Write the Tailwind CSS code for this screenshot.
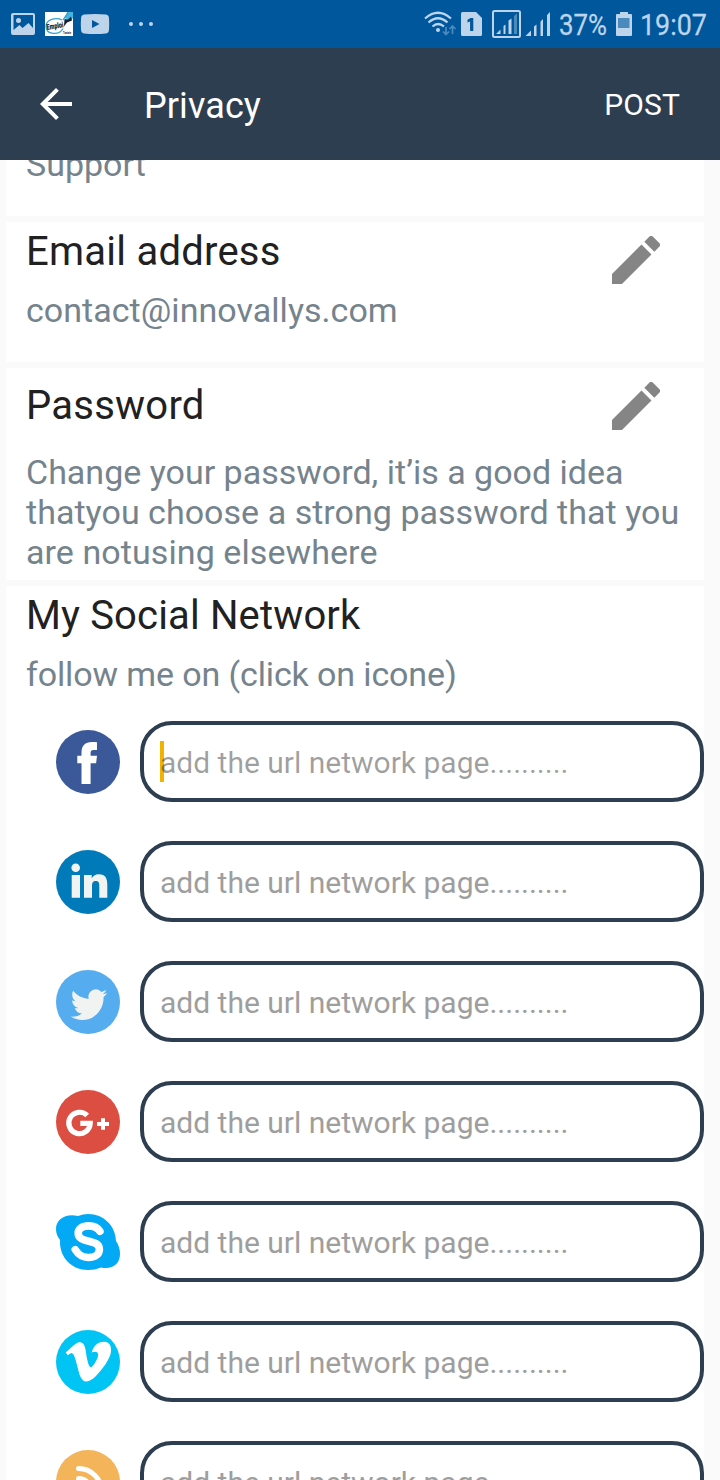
<!DOCTYPE html>
<html lang="en">
<head>
<meta charset="utf-8">
<title>Privacy</title>
<script src="https://cdn.jsdelivr.net/npm/@tailwindcss/browser@4"></script>
</head>
<body class="bg-[#fafafa]">
<div class="w-[720px] h-[1480px] overflow-hidden flex flex-col font-['Roboto',sans-serif]">
  <!-- Status bar -->
  <div class="h-12 shrink-0 bg-[#00579c] text-[#bdd4ea] flex items-center justify-between">
    <svg class="block" width="240" height="48" viewBox="0 0 240 48">
      <path fill="currentColor" fill-rule="evenodd" d="M13 13h20a2 2 0 0 1 2 2v18a2 2 0 0 1-2 2H13a2 2 0 0 1-2-2V15a2 2 0 0 1 2-2zM13.500 15v15l6-5 3 3 6-5 4.500 5V15z"/>
      <circle cx="18.500" cy="20.500" r="2.500" fill="currentColor"/>
      <rect x="45" y="12" width="28" height="24" fill="#fff"/>
      <path d="M67 12h6v6l-3 3-5-3z" fill="#43b5e3"/>
      <path d="M64.500 19l3.500.500 3-3 1 4-5 2-3 4z" fill="#142230"/>
      <path d="M62 20c-6-3-16-1-16 6.500 0 8 13 9.500 17 2M63 20l5-7" fill="none" stroke="#35a2cf" stroke-width="1.300"/>
      <text x="47" y="30" transform="rotate(-9 47 30)" font-size="8" font-weight="900" textLength="17" lengthAdjust="spacingAndGlyphs" fill="#111">Emploi</text>
      <text x="63" y="34" font-size="3.500" font-weight="700" textLength="8" lengthAdjust="spacingAndGlyphs" fill="#111">Tunisie</text>
      <path fill="currentColor" fill-rule="evenodd" d="M84 14.500q11-1 22 0 3 .5 3 4 .4 5.500 0 11 0 3.500-3 4-11 1-22 0-3-.5-3-4-.4-5.500 0-11 0-3.500 3-4zM92 20v8l7.500-4z"/>
      <g fill="currentColor"><circle cx="131" cy="24" r="2"/><circle cx="141" cy="24" r="2"/><circle cx="151" cy="24" r="2"/></g>
    </svg>
    <svg class="block" width="310" height="48" viewBox="410 0 310 48">
      <g fill="none" stroke="currentColor" stroke-width="2.200">
        <path d="M425 18.500q13-11.500 26 0M428.500 22.500q9.500-8.500 19 0M432.500 26.500q5.500-5 11.500 0"/>
      </g>
      <circle cx="438" cy="30" r="2" fill="currentColor"/>
      <g stroke="#4b8abd" stroke-width="1.700" fill="none"><path d="M446 27v8M443 31.500l3 3 3-3M452.500 34v-8M449.500 29l3-3 3 3"/></g>
      <path fill="currentColor" d="M462.500 12h13.500l6 6v16.500a1.500 1.500 0 0 1-1.500 1.500h-18a1.500 1.500 0 0 1-1.500-1.500v-21a1.500 1.500 0 0 1 1.500-1.500z"/>
      <path fill="#00579c" d="M470.500 18h2.800v13h-3.200v-9.500l-2.600 1v-2.700z"/>
      <rect x="493" y="11" width="27" height="26" rx="1.500" fill="none" stroke="currentColor" stroke-width="2"/>
      <g fill="currentColor"><path d="M496 34l4.500-4.500V34zM503.500 26l2-1.500V34h-2zM508.500 20.500l3-2v15.500h-3z"/><path d="M525.500 36l5.500-5.500V36zM534 26.500l2.500-2V36h-2.500zM540.500 21.500l2.500-2.500v17h-2.500zM547 15l3-3v24h-3z"/><path fill="#4b8abd" d="M514 16l3-2.500V34h-3z"/></g>
      <text x="559" y="35" font-size="30" fill="currentColor" stroke="currentColor" stroke-width=".3" textLength="48" lengthAdjust="spacingAndGlyphs">37%</text>
      <path fill="currentColor" d="M620 12h8v2h3q1 0 1 1v20q0 1-1 1h-14q-1 0-1-1V15q0-1 1-1h3z"/>
      <rect x="618" y="18" width="11.500" height="10" fill="#4b8abd"/>
      <text x="640" y="35" font-size="30" fill="currentColor" stroke="currentColor" stroke-width=".3" textLength="67" lengthAdjust="spacingAndGlyphs">19:07</text>
    </svg>
  </div>
  <!-- App bar -->
  <div class="h-28 shrink-0 bg-[#2d3e50] text-white flex items-center pl-10 pr-10">
    <svg class="block" width="32" height="32" viewBox="4 4 16 16" fill="currentColor"><path d="M20 11H7.830l5.590-5.590L12 4l-8 8 8 8 1.410-1.410L7.830 13H20v-2z"/></svg>
    <h1 class="ml-[72px] mt-1 text-[36px] leading-[42px] tracking-[0.1px]">Privacy</h1>
    <div class="ml-auto mt-0.5 text-[30px] leading-9 tracking-[0.1px]">POST</div>
  </div>
  <!-- Settings cards -->
  <main class="ml-1.5 w-[698px] flex flex-col gap-1.5 text-[34px] leading-10 text-[#75838d]">
    <section class="h-14 bg-white pl-5 overflow-hidden"><div class="-mt-4">Support</div></section>
    <section class="h-[140px] bg-white pl-5 pr-11 flex justify-between">
      <div>
        <h2 class="mt-[6px] text-[40px] leading-[47px] tracking-[0.24px] text-[#212121]">Email address</h2>
        <div class="mt-[15px] tracking-[0.04px]">contact@innovallys.com</div>
      </div>
      <svg class="mt-[14px]" width="48" height="48" viewBox="3 3 18 18" fill="#858585"><path d="M3 17.250V21h3.750L17.810 9.940l-3.750-3.750L3 17.250zM20.710 7.040a1 1 0 0 0 0-1.410l-2.340-2.340a1 1 0 0 0-1.410 0l-1.830 1.830 3.750 3.750 1.830-1.830z"/></svg>
    </section>
    <section class="h-[212px] bg-white pl-5">
      <div class="flex justify-between pr-11">
        <h2 class="mt-[14px] text-[40px] leading-[47px] tracking-[0.24px] text-[#212121]">Password</h2>
        <svg class="mt-[14px]" width="48" height="48" viewBox="3 3 18 18" fill="#858585"><path d="M3 17.250V21h3.750L17.810 9.940l-3.750-3.750L3 17.250zM20.710 7.040a1 1 0 0 0 0-1.410l-2.340-2.340a1 1 0 0 0-1.410 0l-1.830 1.830 3.750 3.750 1.830-1.830z"/></svg>
      </div>
      <p class="mt-[22px] whitespace-nowrap">Change your password, it’is a good idea<br><span class="tracking-[0.03px]">thatyou choose a strong password that you</span><br><span class="tracking-[0.08px]">are notusing elsewhere</span></p>
    </section>
    <section class="h-[894px] bg-white overflow-hidden">
      <div class="pl-5">
        <h2 class="pt-[6px] text-[40px] leading-[47px] tracking-[0.15px] text-[#212121]">My Social Network</h2>
        <div class="mt-[15px] tracking-[-0.12px]">follow me on (click on icone)</div>
      </div>
      <div class="mt-[27px] pl-[50px] flex flex-col gap-[39px] text-[30px] leading-9 text-[#9e9e9e]">
        <div class="flex items-center gap-5">
          <svg width="64" height="64" viewBox="0 0 64 64"><circle cx="32" cy="32" r="32" fill="#3b5998"/><path fill="#fff" d="M25.500 54V33.300H21.300V25.700h4.200V23c0-7.500 3.500-11 10.500-11 2 0 3.500.1 5 .3V20h-3.200c-2.500 0-3.200 1-3.200 3v2.700H41l-.9 7.600h-5.500V54z"/></svg>
          <div class="relative w-[564px] h-[81px] border-4 border-[#2d3e50] rounded-[32px] pl-4 flex items-center"><span class="absolute left-4 top-4 w-1 h-[41px] bg-[#f0b400]"></span><span class="relative mt-[3px] text-black/38">add the url network page..........</span></div>
        </div>
        <div class="flex items-center gap-5">
          <svg width="64" height="64" viewBox="0 0 64 64"><circle cx="32" cy="32" r="32" fill="#007ab9"/><g fill="#f1f2f2"><circle cx="19.700" cy="17.700" r="4.300"/><path d="M15.700 25H24v22.800H15.700zM28 25h7.700v3.200c1.200-2.200 3.500-4 7-4 7.200 0 8.600 4.500 8.600 11v12.600h-8V36.500c0-3 0-5.500-3.500-5.500s-3.800 2.500-3.800 5.500v11.300H28z"/></g></svg>
          <div class="w-[564px] h-[81px] border-4 border-[#2d3e50] rounded-[32px] pl-4 flex items-center"><span class="mt-[3px]">add the url network page..........</span></div>
        </div>
        <div class="flex items-center gap-5">
          <svg width="64" height="64" viewBox="0 0 64 64"><circle cx="32" cy="32" r="32" fill="#55acee"/><path transform="translate(14.700 15.900) scale(1.525 1.570)" fill="#f1f2f2" d="M23.953 4.570a10 10 0 0 1-2.825.775 4.958 4.958 0 0 0 2.163-2.723c-.951.555-2.005.959-3.127 1.184a4.920 4.920 0 0 0-8.384 4.482C7.690 8.095 4.067 6.130 1.640 3.162a4.822 4.822 0 0 0-.666 2.475c0 1.710.870 3.213 2.188 4.096a4.904 4.904 0 0 1-2.228-.616v.06a4.923 4.923 0 0 0 3.946 4.827 4.996 4.996 0 0 1-2.212.085 4.936 4.936 0 0 0 4.604 3.417 9.867 9.867 0 0 1-6.102 2.105c-.390 0-.779-.023-1.170-.067a13.995 13.995 0 0 0 7.557 2.209c9.053 0 13.998-7.496 13.998-13.985 0-.210 0-.420-.015-.630a9.935 9.935 0 0 0 2.460-2.548z"/></svg>
          <div class="w-[564px] h-[81px] border-4 border-[#2d3e50] rounded-[32px] pl-4 flex items-center"><span class="mt-[3px]">add the url network page..........</span></div>
        </div>
        <div class="flex items-center gap-5">
          <svg width="64" height="64" viewBox="0 0 64 64"><circle cx="32" cy="32" r="32" fill="#dc4e41"/><g fill="none" stroke="#fff" stroke-width="5.200"><path d="M31.200 25.500A10.700 10.700 0 1 0 34.200 33.400H24.300"/><path stroke-width="4" d="M47 28.300v11.500M41 34h12"/></g></svg>
          <div class="w-[564px] h-[81px] border-4 border-[#2d3e50] rounded-[32px] pl-4 flex items-center"><span class="mt-[3px]">add the url network page..........</span></div>
        </div>
        <div class="flex items-center gap-5">
          <svg width="64" height="64" viewBox="0 0 64 64"><path fill="#03a9f4" d="M22 6Q27 4 32 4C48 4 59.500 16 60 31Q64 37 64 44C64 54 56 60 45 57.500Q39 60 32 60C16 60 4 48 4 32V30Q0 25 0 19C0 9 10 3 22 6Z"/><path d="M44.200 21.300c-2.500-4-6.500-5.400-11.200-5.400-6.500 0-10.500 3-10.500 7.300 0 11 21.200 5 21.200 16 0 5.500-5 8.300-11.200 8.300-7.500 0-10.500-4-12.900-7.700" fill="none" stroke="#fff" stroke-width="7.600" stroke-linecap="round" transform="translate(-.3 0)"/></svg>
          <div class="w-[564px] h-[81px] border-4 border-[#2d3e50] rounded-[32px] pl-4 flex items-center"><span class="mt-[3px]">add the url network page..........</span></div>
        </div>
        <div class="flex items-center gap-5">
          <svg width="64" height="64" viewBox="0 0 64 64"><circle cx="32" cy="32" r="32" fill="#00c4f3"/><path transform="translate(9.700 8.600) scale(1.890 1.920)" fill="#fff" d="M23.977 6.416c-.105 2.338-1.739 5.543-4.894 9.609-3.268 4.247-6.026 6.370-8.290 6.370-1.409 0-2.578-1.294-3.553-3.881L5.322 11.400C4.603 8.816 3.834 7.522 3.010 7.522c-.179 0-.806.378-1.881 1.132L0 7.197a315.065 315.065 0 0 0 3.501-3.128C5.080 2.701 6.266 1.984 7.055 1.910c1.867-.180 3.016 1.100 3.447 3.838.465 2.953.789 4.789.971 5.507.539 2.450 1.131 3.674 1.776 3.674.502 0 1.256-.796 2.265-2.385 1.004-1.589 1.540-2.797 1.612-3.628.144-1.371-.395-2.061-1.614-2.061-.574 0-1.167.121-1.777.391 1.186-3.868 3.434-5.757 6.762-5.637 2.473.060 3.628 1.664 3.480 4.807z"/></svg>
          <div class="w-[564px] h-[81px] border-4 border-[#2d3e50] rounded-[32px] pl-4 flex items-center"><span class="mt-[3px]">add the url network page..........</span></div>
        </div>
        <div class="flex items-center gap-5">
          <svg width="64" height="64" viewBox="0 0 64 64"><circle cx="32" cy="32" r="32" fill="#f4b459"/><g fill="none" stroke="#fff" stroke-width="5" stroke-linecap="round"><path d="M22.500 18.500A23 23 0 0 1 45.500 41.500M22.500 28.500A13 13 0 0 1 35.500 41.500"/></g><circle cx="24" cy="40" r="4" fill="#fff"/></svg>
          <div class="w-[564px] h-[81px] border-4 border-[#2d3e50] rounded-[32px] pl-4 flex items-center"><span class="mt-[3px]">add the url network page..........</span></div>
        </div>
      </div>
    </section>
  </main>
</div>
</body>
</html>
